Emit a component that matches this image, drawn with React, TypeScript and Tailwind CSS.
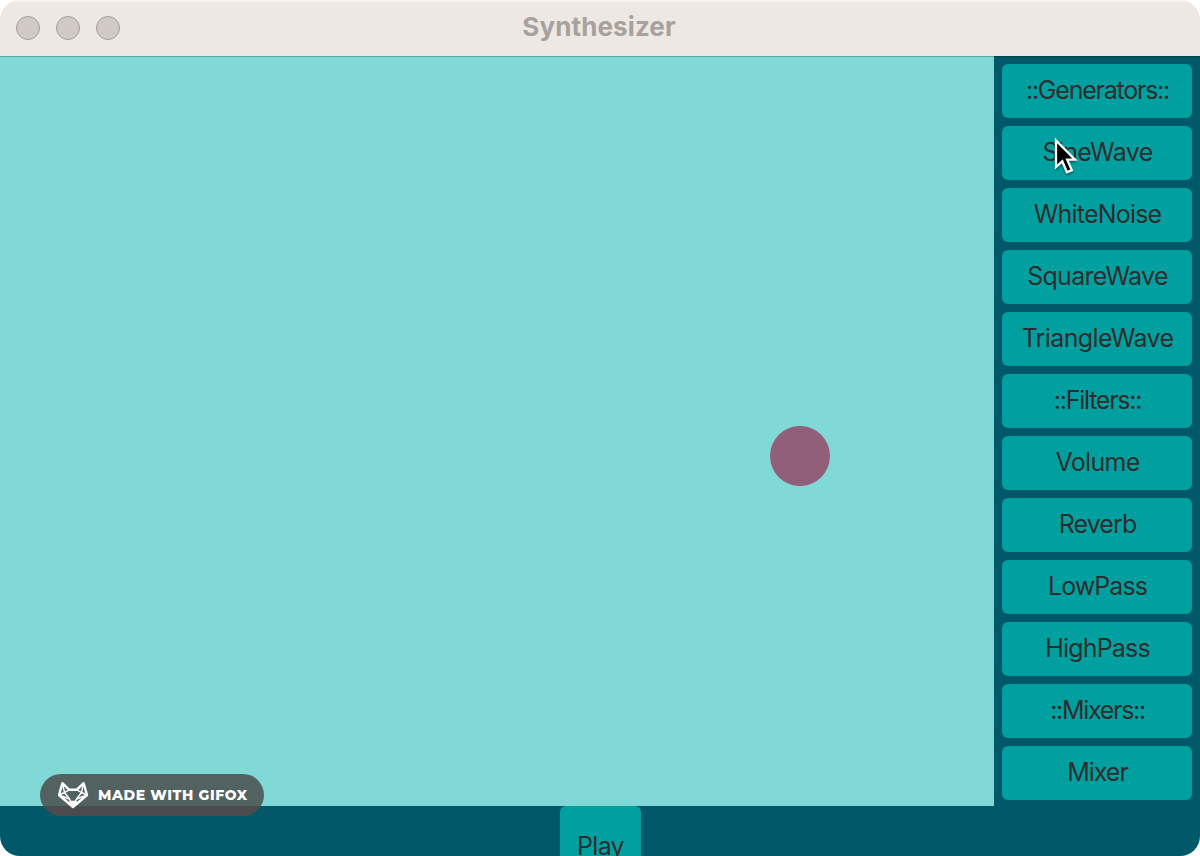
const modules = [
  { label: "::Generators::", spacing: "tracking-[-1.23px]" },
  { label: "SineWave", spacing: "tracking-[-0.65px]" },
  { label: "WhiteNoise", spacing: "tracking-[-0.8px]" },
  { label: "SquareWave", spacing: "tracking-[-0.7px]" },
  { label: "TriangleWave", spacing: "tracking-[-0.6px]" },
  { label: "::Filters::", spacing: "tracking-[-1.25px]" },
  { label: "Volume", spacing: "tracking-[-0.7px]" },
  { label: "Reverb", spacing: "tracking-[-0.9px]" },
  { label: "LowPass", spacing: "tracking-[-0.95px]" },
  { label: "HighPass", spacing: "tracking-[-0.8px]" },
  { label: "::Mixers::", spacing: "tracking-[-1.3px]" },
  { label: "Mixer", spacing: "tracking-[-1px]" },
];

function TitleBar() {
  return (
    <header className="grid h-14 shrink-0 grid-cols-[1fr_auto_1fr] items-center border-t-2 border-[#f5f2ef] bg-[#ede8e3] px-4 pb-0.5">
      <div className="flex gap-4">
        {["close", "minimise", "zoom"].map((name) => (
          <span key={name} className="size-6 rounded-full border border-[#a39d9c] bg-[#d0c9c6]" />
        ))}
      </div>
      <h1 className="pr-0.5 pb-[3px] text-[26px] leading-8 font-bold tracking-[0.1px] text-[#a8a19d]">Synthesizer</h1>
    </header>
  );
}

function Sidebar() {
  return (
    <aside className="flex w-[206px] shrink-0 flex-col gap-2 border-t border-[#00404c] bg-[#005868] px-2 pt-[7px]">
      {modules.map((m) => (
        <button
          key={m.label}
          className={`flex h-[54px] shrink-0 items-center justify-center rounded-[6px] bg-[#00a0a0] pb-[3px] pl-px text-[25px] leading-8 whitespace-nowrap text-[#2d2d2d] ${m.spacing}`}
        >
          {m.label}
        </button>
      ))}
    </aside>
  );
}

function FoxIcon() {
  return (
    <svg className="h-7 w-8" viewBox="0 0 32 28" fill="none" stroke="white" strokeWidth="1.4" strokeLinejoin="round">
      <path strokeWidth="2.4" d="M5.4 2.2 L12.3 8.8 H19.7 L26.6 2.2 L30 14 L16 26 L2 14 Z" />
      <path d="M5.4 2 L7.5 11.5 L2 14 L12.5 18 L16 25 L19.5 18 L30 14 L24.5 11.5 L26.6 2" />
      <path d="M12.3 8.8 L7.5 11.5 L12.5 18 M19.7 8.8 L24.5 11.5 L19.5 18" />
      <path fill="white" d="M12.8 20.5 H19.2 L16 26.5 Z" />
    </svg>
  );
}

function Watermark() {
  return (
    <div className="absolute top-[774px] left-10 flex h-[42px] w-56 items-center rounded-full bg-linear-to-b from-[#526260] from-[32px] to-[#4b4a4c] to-[32px] pl-[17px] text-white">
      <FoxIcon />
      <span className="ml-[9px] font-['Montserrat','Inter',sans-serif] text-[14px] leading-5 font-extrabold tracking-[0.58px] whitespace-nowrap">
        MADE WITH GIFOX
      </span>
    </div>
  );
}

function Cursor() {
  return (
    <svg
      className="absolute top-[134px] left-[1050px] h-11 w-8 drop-shadow-[0_2px_1px_rgba(0,0,0,0.35)]"
      viewBox="0 0 32 44"
    >
      <path
        d="M6 6.5 V33 L12.3 27.3 L16.9 38.2 L21.8 36.1 L17.2 25.7 H25 Z"
        fill="black"
        stroke="white"
        strokeWidth="2.3"
      />
    </svg>
  );
}

export default function App() {
  return (
    <div className="h-[856px] w-[1200px] bg-white font-['Inter',sans-serif]">
      <div className="relative flex h-full flex-col overflow-hidden rounded-[20px]">
        <TitleBar />
        <div className="flex h-[750px] shrink-0">
          <main className="relative flex-1 border-t border-[#56adab] bg-[#80d9d7]">
            <div className="absolute top-[369px] left-[770px] size-[60px] rounded-full bg-[#925f79]" />
          </main>
          <Sidebar />
        </div>
        <footer className="flex h-[50px] shrink-0 justify-center overflow-hidden bg-[#005868] pl-px">
          <button className="flex h-20 w-[81px] shrink-0 items-center justify-center rounded-[6px] bg-[#00a0a0] text-[25px] leading-8 tracking-[-0.7px] text-[#2d2d2d]">
            Play
          </button>
        </footer>
        <Watermark />
        <Cursor />
      </div>
    </div>
  );
}
